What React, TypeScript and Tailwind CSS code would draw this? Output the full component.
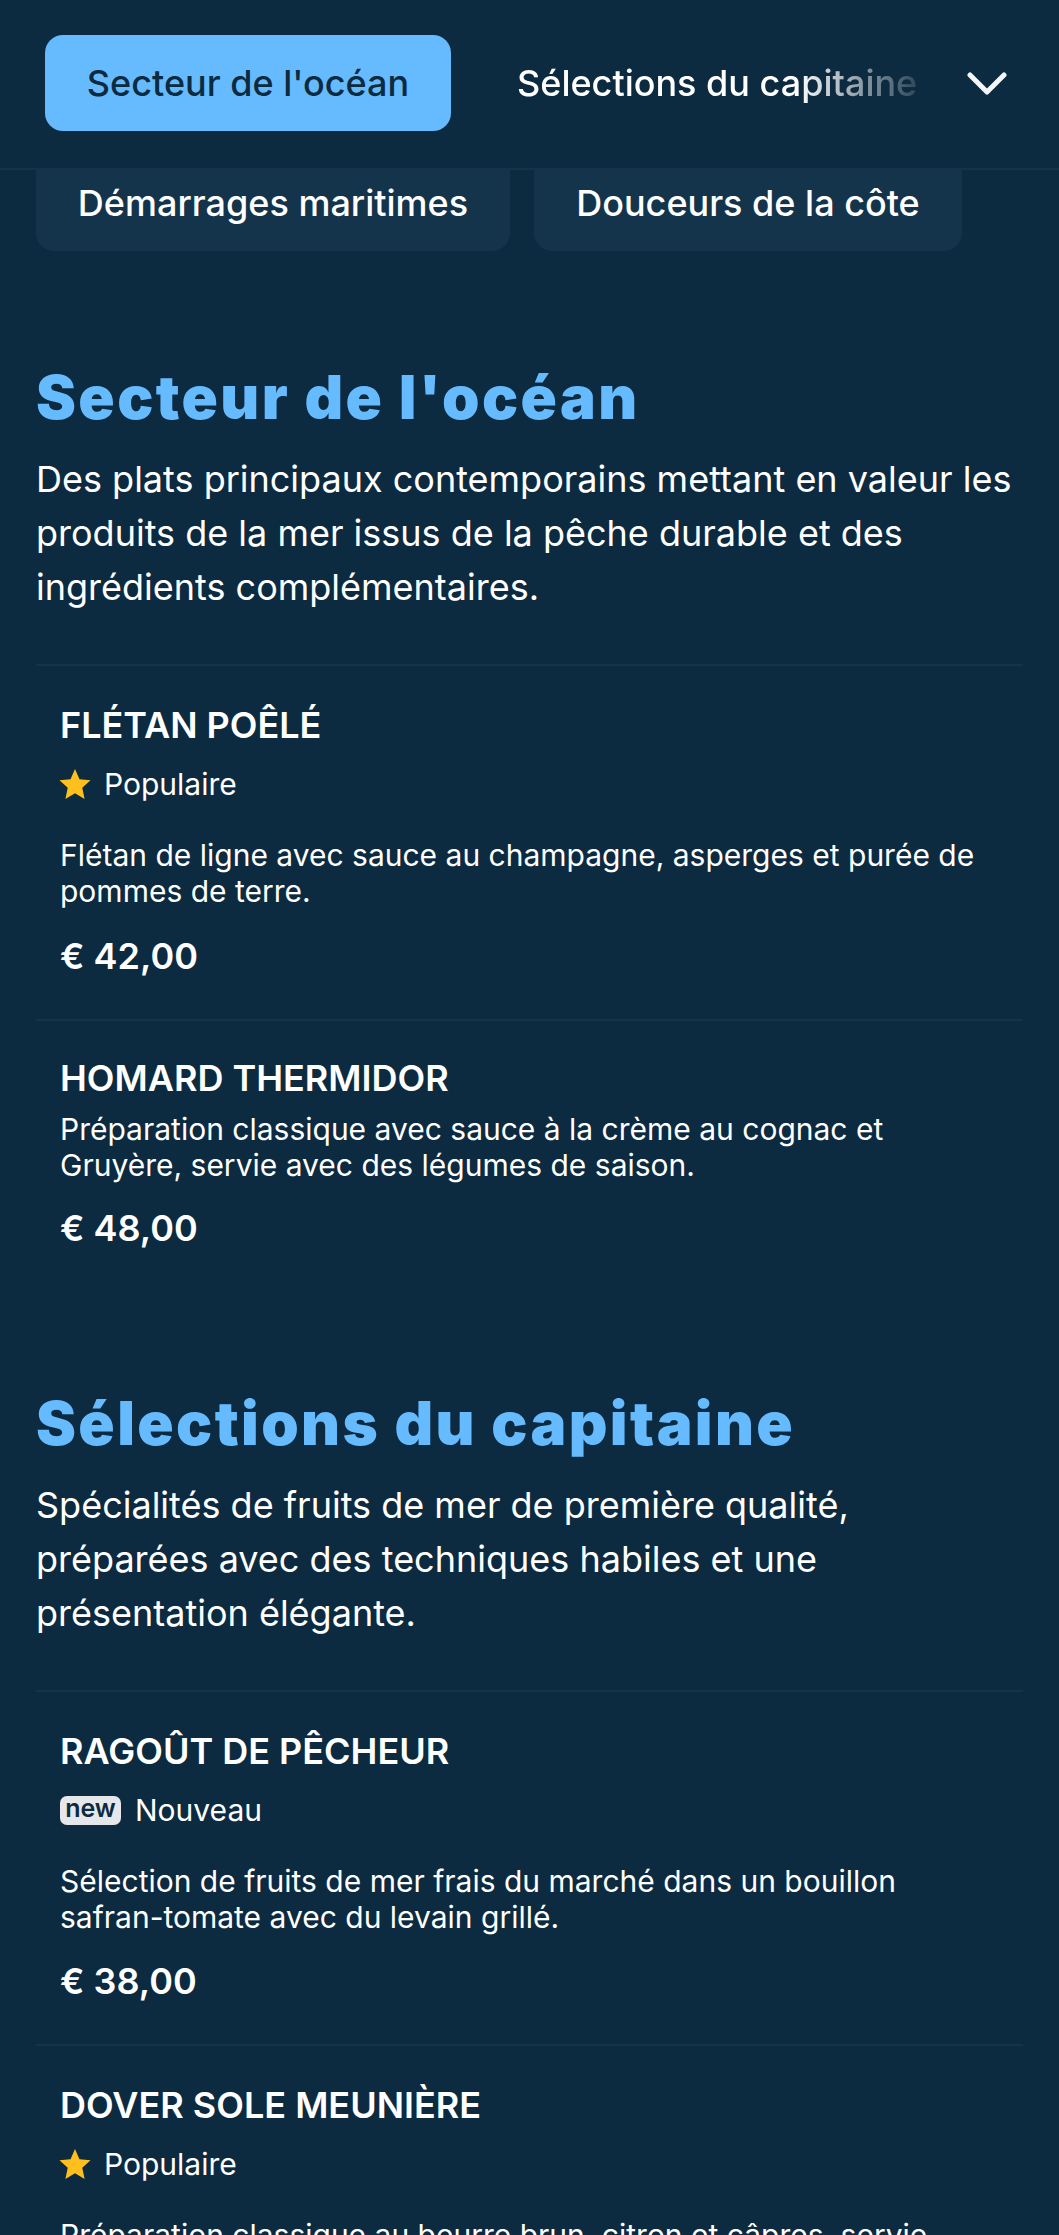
const items1 = [
  {
    name: "FLÉTAN POÊLÉ",
    badge: "star",
    desc: "Flétan de ligne avec sauce au champagne, asperges et purée de pommes de terre.",
    price: "€ 42,00",
  },
  {
    name: "HOMARD THERMIDOR",
    desc: "Préparation classique avec sauce à la crème au cognac et Gruyère, servie avec des légumes de saison.",
    price: "€ 48,00",
  },
];

const items2 = [
  {
    name: "RAGOÛT DE PÊCHEUR",
    badge: "new",
    desc: "Sélection de fruits de mer frais du marché dans un bouillon safran-tomate avec du levain grillé.",
    price: "€ 38,00",
  },
  {
    name: "DOVER SOLE MEUNIÈRE",
    badge: "star",
    desc: "Préparation classique au beurre brun, citron et câpres, servie avec des pommes de terre.",
    price: "€ 52,00",
  },
];

function Star() {
  return (
    <svg viewBox="0 0 30 30" className="w-[32px] h-[32px] -ml-[1px] -mr-[1px] shrink-0">
      <polygon points="15,1 19.2,10.6 29.6,11.6 21.8,18.6 24,29 15,23.6 6,29 8.2,18.6 0.4,11.6 10.8,10.6" fill="#ffc01e" />
    </svg>
  );
}

function Item({ item }: { item: { name: string; badge?: string; desc: string; price: string } }) {
  return (
    <div className={`border-t-2 border-[#14344b] px-6 pb-[41px] ${item.badge ? "pt-[38px]" : "pt-[36px]"}`}>
      <h3 className="text-[36px] leading-[43px] font-semibold text-white">{item.name}</h3>
      {item.badge === "star" && (
        <div className="flex items-center gap-[14px] mt-[20px] mb-[36px] h-[34px]">
          <Star />
          <span className="text-[30px] leading-[34px] text-white">Populaire</span>
        </div>
      )}
      {item.badge === "new" && (
        <div className="flex items-center gap-[14px] mt-[20px] mb-[36px] h-[34px]">
          <span className="bg-[#e5e7eb] rounded-[7px] w-[61px] h-[29px] pb-[3px] flex items-center justify-center text-[25px] leading-none font-semibold text-[#0c2a40]">new</span>
          <span className="text-[30px] leading-[34px] text-white">Nouveau</span>
        </div>
      )}
      <p className={`text-[30px] leading-[36px] text-white ${item.badge ? "" : "mt-[11px]"}`}>{item.desc}</p>
      <div
        className={`text-[36px] leading-[43px] font-semibold text-white ${
          item.badge === "star" ? "mt-[26px]" : item.badge === "new" ? "mt-[25px]" : "mt-[24px]"
        }`}
      >
        {item.price}
      </div>
    </div>
  );
}

function Section({ title, text, items }: { title: string; text: string; items: any[] }) {
  return (
    <section>
      <h2 className="text-[60px] leading-[72px] font-black tracking-[2.4px] text-[#66bbff]">{title}</h2>
      <p className="text-[36px] leading-[54px] text-white mt-[19px] mb-[50px]">{text}</p>
      {items.map((item) => (
        <Item key={item.name} item={item} />
      ))}
    </section>
  );
}

export default function App() {
  return (
    <div className="h-[2235px] overflow-hidden bg-[#0c2a40] font-['Inter',sans-serif]">
      {/* Sticky tabs */}
      <div className="h-[170px] border-b-2 border-[#14344b] flex items-center pl-[45px] pb-[2px]">
        <button className="w-[406px] h-[96px] rounded-[18px] bg-[#66bbff] text-[36px] font-medium text-[#0c2a40] shrink-0">
          Secteur de l'océan
        </button>
        <div className="ml-[66px] w-[400px] overflow-hidden whitespace-nowrap text-[36px] font-medium text-white [mask-image:linear-gradient(to_right,black_70%,transparent_105%)]">
          Sélections du capitaine
        </div>
        <svg viewBox="0 0 40 23" className="w-[40px] h-[23px] ml-[50px] shrink-0" fill="none" stroke="#f4f6f8" strokeWidth="5" strokeLinecap="round" strokeLinejoin="round">
          <polyline points="3,3 20,20 37,3" />
        </svg>
      </div>

      <div className="flex gap-6 px-9">
        <div className="w-[474px] h-[81px] pb-[15px] rounded-b-[18px] bg-[#14344b] flex items-center justify-center text-[36px] font-medium text-white">
          Démarrages maritimes
        </div>
        <div className="w-[428px] h-[81px] pb-[15px] rounded-b-[18px] bg-[#14344b] flex items-center justify-center text-[36px] font-medium text-white">
          Douceurs de la côte
        </div>
      </div>

      <main className="px-9 pt-[110px] flex flex-col gap-[96px]">
        <Section
          title="Secteur de l'océan"
          text="Des plats principaux contemporains mettant en valeur les produits de la mer issus de la pêche durable et des ingrédients complémentaires."
          items={items1}
        />
        <Section
          title="Sélections du capitaine"
          text="Spécialités de fruits de mer de première qualité, préparées avec des techniques habiles et une présentation élégante."
          items={items2}
        />
      </main>
    </div>
  );
}
